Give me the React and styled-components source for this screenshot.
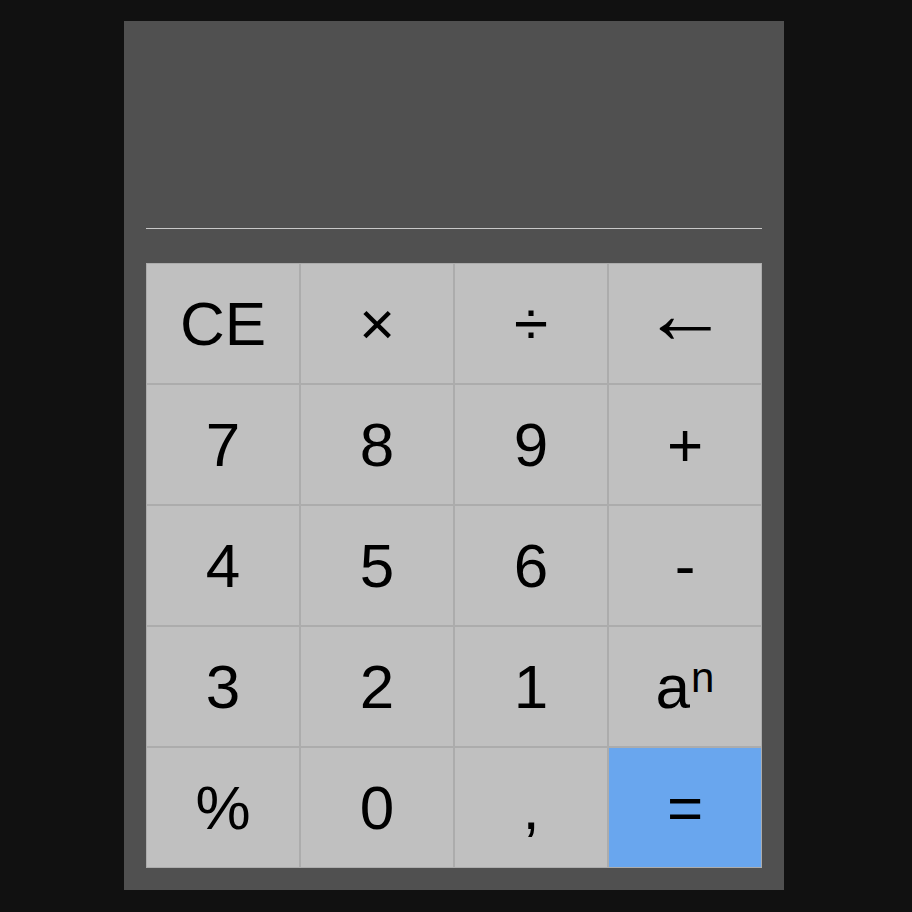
import React from "react";
import styled, { createGlobalStyle } from "styled-components";

const Global = createGlobalStyle`
body {
  margin: 0;
  background-color: #111111;
  font-family: "Liberation Sans", Arial, sans-serif;
}
`;

const Page = styled.div`
  padding: 21px 0 0 124px;
`;

const Panel = styled.div`
  width: 616px;
  background-color: #505050;
  padding: 0 22px 22px;
`;

const Display = styled.div`
  height: 207px;
  border-bottom: 1px solid #c8c8c8;
  margin-bottom: 34px;
`;

const Keys = styled.div`
  display: grid;
  grid-template-columns: repeat(4, 154px);
  grid-auto-rows: 121px;
`;

const Key = styled.button`
  box-sizing: border-box;
  margin: 0;
  padding: 0;
  border: 1px solid #acacac;
  background-color: ${(p) => (p.$accent ? "#69a6ee" : "#c0c0c0")};
  color: #000;
  font-family: "Liberation Sans", Arial, sans-serif;
  font-size: 62px;
  line-height: 1;
  display: flex;
  align-items: center;
  justify-content: center;
  cursor: pointer;
`;

const Arrow = styled.span`
  font-size: 86px;
  line-height: 1;
  margin-top: -22px;
`;

const Sup = styled.span`
  font-size: 42px;
  vertical-align: 16px;
  margin-left: 1px;
`;

const keys = [
  "CE", "×", "÷", "←",
  "7", "8", "9", "+",
  "4", "5", "6", "-",
  "3", "2", "1", "pow",
  "%", "0", ",", "=",
];

const label = (k) => {
  if (k === "pow") {
    return (
      <span>
        a<Sup>n</Sup>
      </span>
    );
  }
  if (k === "←") return <Arrow>←</Arrow>;
  return k;
};

const App = () => {
  return (
    <Page>
      <Global />
      <Panel>
        <Display />
        <Keys>
          {keys.map((k) => (
            <Key key={k} $accent={k === "="}>
              {label(k)}
            </Key>
          ))}
        </Keys>
      </Panel>
    </Page>
  );
};

export default App;
